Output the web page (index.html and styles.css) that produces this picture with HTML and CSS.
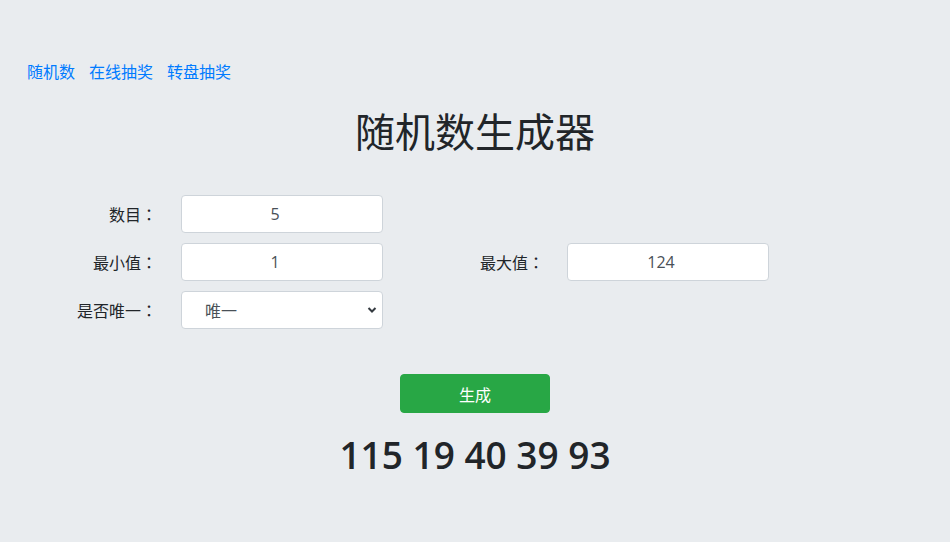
FILE: index.html
```html
<!DOCTYPE html>
<html lang="zh-CN">
<head>
<meta charset="utf-8">
<title>随机数生成器</title>
<link rel="stylesheet" href="styles.css">
</head>
<body>
<div class="page">
  <nav class="nav">
    <a href="#">随机数</a>
    <a href="#">在线抽奖</a>
    <a href="#">转盘抽奖</a>
  </nav>
  <h1 class="title">随机数生成器</h1>
  <form class="form">
    <label class="label">数目<span class="colon" lang="ja">：</span></label>
    <input class="control" type="text" value="5">
    <span></span><span></span>
    <label class="label">最小值<span class="colon" lang="ja">：</span></label>
    <input class="control" type="text" value="1">
    <label class="label label-right">最大值<span class="colon" lang="ja">：</span></label>
    <input class="control" type="text" value="124">
    <label class="label">是否唯一<span class="colon" lang="ja">：</span></label>
    <div class="select-wrap">
      <select class="control select">
        <option>唯一</option>
        <option>不唯一</option>
      </select>
      <svg class="chevron" width="10" height="8" viewBox="0 0 10 8"><path d="M1.5 2 L5 5.5 L8.5 2" fill="none" stroke="#343a40" stroke-width="2"/></svg>
    </div>
  </form>
  <div class="actions">
    <button class="btn" type="button">生成</button>
  </div>
  <div class="result">115 19 40 39 93</div>
</div>
</body>
</html>
```

FILE: styles.css
```css
html, body {
  margin: 0;
  padding: 0;
  background: #e9ecef;
}
body {
  font-family: "Open Sans", "Noto Sans CJK SC", sans-serif;
  color: #212529;
  font-size: 16px;
}
.page {
  padding-top: 59px;
}
.nav {
  display: flex;
  gap: 14px;
  padding-left: 27px;
  line-height: 24px;
  height: 24px;
}
.nav a {
  color: #007bff;
  text-decoration: none;
  font-family: "Noto Sans CJK SC", sans-serif;
  font-size: 16px;
}
.title {
  margin: 23px 0 0;
  text-align: center;
  font-family: "Noto Sans CJK SC", sans-serif;
  font-size: 40px;
  font-weight: 400;
  line-height: 48px;
  height: 48px;
  color: #212529;
}
.form {
  margin-top: 41px;
  display: grid;
  grid-template-columns: 181px 202px 184px 202px;
  row-gap: 10px;
}
.label {
  font-family: "Noto Sans CJK SC", sans-serif;
  font-size: 16px;
  line-height: 38px;
  text-align: right;
  padding-right: 24px;
  color: #212529;
  white-space: nowrap;
}
.label-right {
  padding-right: 23px;
}
.colon {
  font-family: "Noto Sans CJK JP", sans-serif;
}
.control {
  box-sizing: border-box;
  width: 202px;
  height: 38px;
  border: 1px solid #ced4da;
  border-radius: 4px;
  background: #fff;
  font-family: "Open Sans", "Noto Sans CJK SC", sans-serif;
  font-size: 16px;
  color: #495057;
  text-align: center;
  padding: 0 26px 0 12px;
  margin: 0;
  outline: none;
}
.select-wrap {
  position: relative;
  width: 202px;
  height: 38px;
}
.select {
  -webkit-appearance: none;
  appearance: none;
  text-align: left;
  padding-left: 23px;
  font-family: "Noto Sans CJK SC", sans-serif;
  color: #495057;
}
.chevron {
  position: absolute;
  right: 6px;
  top: 15px;
  pointer-events: none;
}
.actions {
  margin-top: 45px;
  display: flex;
  justify-content: center;
}
.btn {
  width: 150px;
  height: 39px;
  border: 1px solid #28a745;
  background: #28a745;
  color: #fff;
  border-radius: 4px;
  font-family: "Noto Sans CJK SC", sans-serif;
  font-size: 16px;
  padding: 0;
}
.result {
  margin-top: 18px;
  text-align: center;
  font-family: "Open Sans", sans-serif;
  font-weight: 600;
  font-size: 37px;
  line-height: 48px;
  color: #212529;
}
```
